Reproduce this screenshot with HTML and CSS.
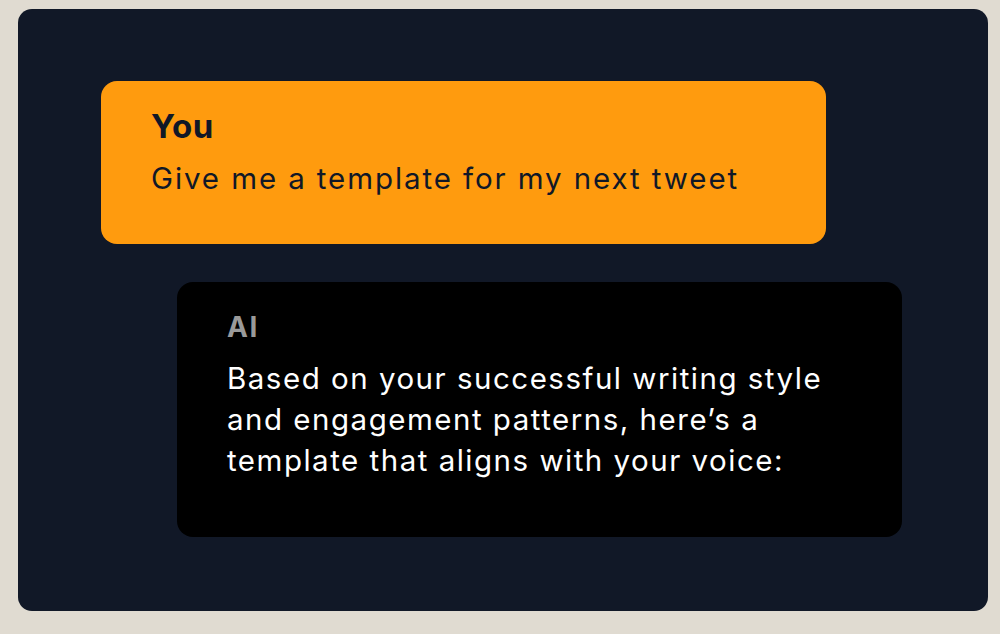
FILE: index.html
```html
<!DOCTYPE html>
<html>
<head>
<meta charset="utf-8">
<link rel="stylesheet" href="styles.css">
</head>
<body>
<div class="card">
  <div class="bubble bubble-user">
    <div class="who">You</div>
    <div class="msg">Give me a template for my next tweet</div>
  </div>
  <div class="bubble bubble-ai">
    <div class="who">AI</div>
    <div class="msg">Based on your successful writing style<br>and engagement patterns, here’s a<br>template that aligns with your voice:</div>
  </div>
</div>
</body>
</html>
```
FILE: styles.css
```css
html, body {
  margin: 0;
  padding: 0;
  background: #e0dbd1;
}
body {
  padding: 9px 12px 23px 18px;
  font-family: "Inter", "Open Sans", sans-serif;
}
.card {
  width: 970px;
  height: 602px;
  box-sizing: border-box;
  background: #111827;
  border-radius: 14px;
  padding: 72px 0 0 83px;
  display: flex;
  flex-direction: column;
  gap: 38px;
}
.bubble {
  width: 725px;
  box-sizing: border-box;
  border-radius: 16px;
  padding: 25px 20px 0 50px;
  font-size: 29.5px;
  line-height: 41px;
  letter-spacing: 1.5px;
}
.bubble-user {
  background: #ff9b0e;
  color: #111827;
  height: 163px;
}
.bubble-user .msg {
  letter-spacing: 1.9px;
}
.bubble-user .who {
  font-size: 33px;
  line-height: 40px;
  letter-spacing: 0.5px;
  margin-bottom: 12px;
}
.bubble-ai {
  background: #000;
  color: #fff;
  height: 255px;
  margin-left: 76px;
}
.who {
  font-weight: 700;
}
.bubble-ai .who {
  color: #9a9a9a;
  font-size: 28px;
  letter-spacing: 1.5px;
  margin-bottom: 10px;
}
```
